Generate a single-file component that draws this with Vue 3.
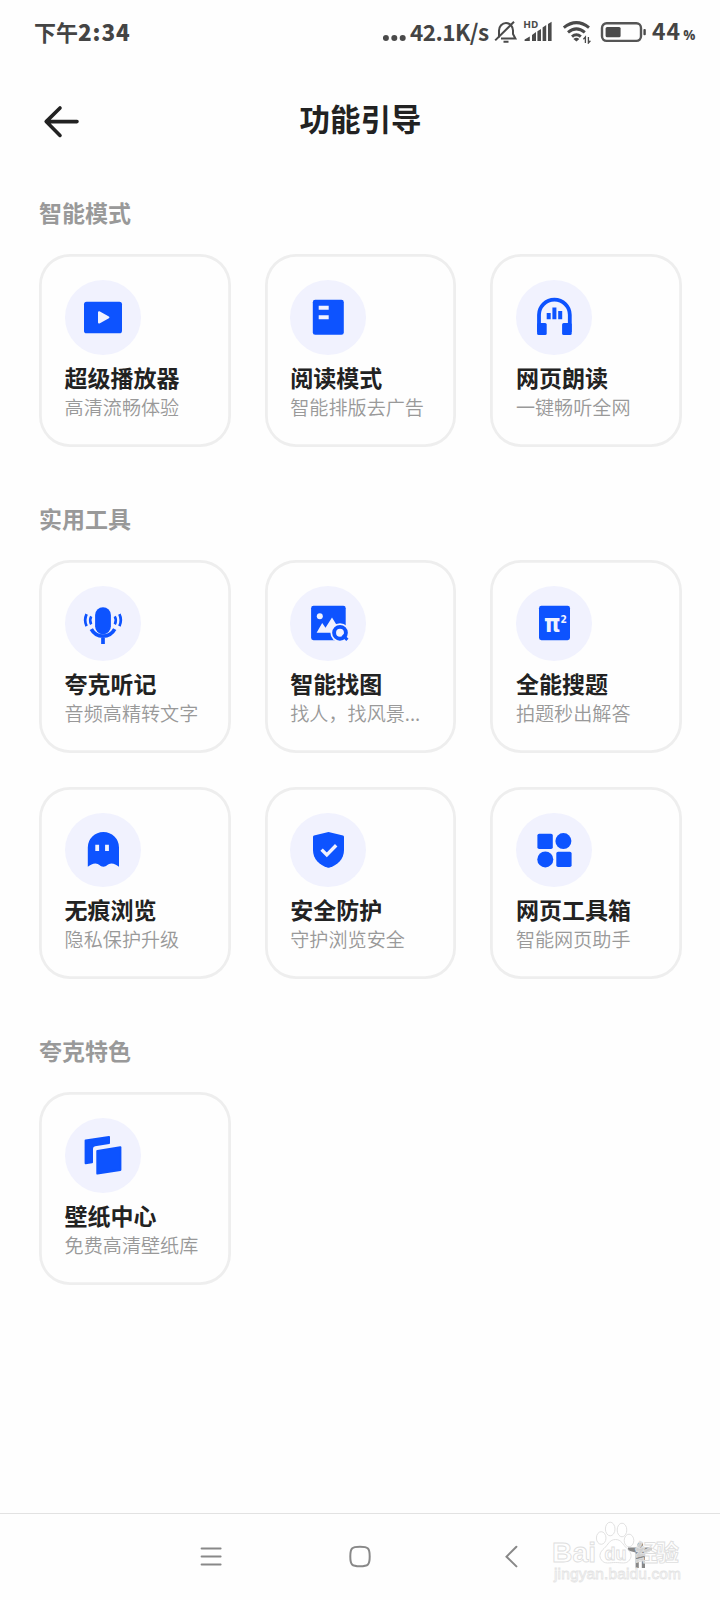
<script setup>
import { ref } from 'vue';

// Icon markup, drawn on the 76x75 badge
const icons = {
  player: `
    <rect x="19" y="21.7" width="38" height="31.6" rx="2.6" fill="#0d53ff"/>
    <path d="M34 32.2v10.4l9.4-5.2z" fill="#f1f2fe" stroke="#f1f2fe" stroke-width="2" stroke-linejoin="round"/>`,
  reader: `
    <rect x="22.8" y="19.8" width="31" height="35" rx="2.4" fill="#0d53ff"/>
    <path d="M28.7 25.8h10v4h-10zM28.7 35.2h10v4h-10z" fill="#f1f2fe"/>`,
  headphone: `
    <path d="M23 52V34.8a15.4 15.2 0 0 1 30.8 0V52" fill="none" stroke="#0d53ff" stroke-width="3.8"/>
    <rect x="21.1" y="43" width="9.6" height="12" rx="1.6" fill="#0d53ff"/>
    <rect x="46.1" y="43" width="9.6" height="12" rx="1.6" fill="#0d53ff"/>
    <path d="M30.7 33h4v6.3h-4zM36.4 27.4h4v11.9h-4zM42.2 31h4v8.3h-4z" fill="#0d53ff"/>`,
  mic: `
    <rect x="30.1" y="21.2" width="15.8" height="27" rx="7.9" fill="#0d53ff"/>
    <path d="M26.3 43.2a13.3 13.3 0 0 0 23.4 0M38 51v7" fill="none" stroke="#0d53ff" stroke-width="3.7"/>
    <path d="M26.2 30.4q-2.2 4 0 8M49.8 30.4q2.2 4 0 8" fill="none" stroke="#0d53ff" stroke-width="2.5"/>
    <path d="M21.6 28.2q-2.9 6.1 0 12M54.4 28.2q2.9 6.1 0 12" fill="none" stroke="#0d53ff" stroke-width="2.7"/>`,
  picture: `
    <rect x="21.1" y="19.8" width="34.6" height="34.4" rx="2.4" fill="#0d53ff"/>
    <circle cx="29.8" cy="30.2" r="3" fill="#f1f2fe"/>
    <path d="M26.6 46.8 32.2 37l3.3 4.8L42 31.6l6 9.6v5.6z" fill="#f1f2fe"/>
    <circle cx="50" cy="46.8" r="9.6" fill="#f1f2fe"/>
    <circle cx="50" cy="46.8" r="5.9" fill="none" stroke="#0d53ff" stroke-width="3.9"/>
    <path d="m52.6 49.2 4.8 4.7" fill="none" stroke="#0d53ff" stroke-width="3.2"/>`,
  search: `
    <rect x="23" y="19.8" width="31" height="34.4" rx="2.4" fill="#0d53ff"/>
    <text x="28" y="46" font-family="DejaVu Sans" font-weight="700" font-size="25" textLength="23" lengthAdjust="spacingAndGlyphs" fill="#f1f2fe">π<tspan dy="-9" font-size="11">2</tspan></text>`,
  ghost: `
    <path d="M22.8 34.4a15.6 15.4 0 0 1 31.2 0v19.4c-2.6-1.6-4.8-3.2-7.6-3.2-3.6 0-4.6 3.2-8 3.2s-4.4-3.2-8-3.2c-2.8 0-5 1.6-7.6 3.2z" fill="#0d53ff"/>
    <path d="M30.3 31.7h3.8v6.4h-3.8zM40.1 31.7h3.8v6.4h-3.8z" fill="#f1f2fe"/>`,
  shield: `
    <path d="M38.5 19 53 22.6q1 .3 1 1.3v13c0 9.5-6.5 14.8-14.3 17.6q-1.2.4-2.4 0C29.5 51.7 23 46.4 23 36.9v-13q0-1 1-1.3z" fill="#0d53ff"/>
    <path d="m31.6 36.6 5.2 5.3 9.4-9.7" fill="none" stroke="#f1f2fe" stroke-width="3.4"/>`,
  blocks: `
    <rect x="21.4" y="20.8" width="15.4" height="15.3" rx="1.8" fill="#0d53ff"/>
    <circle cx="47.4" cy="28.1" r="8" fill="#0d53ff"/>
    <circle cx="29.3" cy="46.4" r="8" fill="#0d53ff"/>
    <rect x="40.3" y="38.8" width="15.3" height="15.3" rx="1.8" fill="#0d53ff"/>`,
  wallpaper: `
    <path d="M20.6 22.4 44 19v5.9l-14 2.3q-3 .6-3 3.6v13.5l-6.4.9z" fill="#0d53ff" stroke="#0d53ff" stroke-width="2" stroke-linejoin="round"/>
    <path d="m32.4 33 22.9-3.7v22.5l-22.9 3.7z" fill="#0d53ff" stroke="#0d53ff" stroke-width="2.2" stroke-linejoin="round"/>`,
};

const sections = ref([
  {
    title: '智能模式',
    items: [
      { icon: 'player', name: '超级播放器', desc: '高清流畅体验' },
      { icon: 'reader', name: '阅读模式', desc: '智能排版去广告' },
      { icon: 'headphone', name: '网页朗读', desc: '一键畅听全网' },
    ],
  },
  {
    title: '实用工具',
    items: [
      { icon: 'mic', name: '夸克听记', desc: '音频高精转文字' },
      { icon: 'picture', name: '智能找图', desc: '找人，找风景...' },
      { icon: 'search', name: '全能搜题', desc: '拍题秒出解答' },
      { icon: 'ghost', name: '无痕浏览', desc: '隐私保护升级' },
      { icon: 'shield', name: '安全防护', desc: '守护浏览安全' },
      { icon: 'blocks', name: '网页工具箱', desc: '智能网页助手' },
    ],
  },
  {
    title: '夸克特色',
    items: [
      { icon: 'wallpaper', name: '壁纸中心', desc: '免费高清壁纸库' },
    ],
  },
]);
</script>

<template>
  <div class="phone">
    <div class="status-bar">
      <span class="clock">下午<b>2:34</b></span>
      <div class="status-right">
        <svg class="dots" width="27" height="24" viewBox="0 0 27 24">
          <circle cx="2.9" cy="18" r="3" />
          <circle cx="11.3" cy="18" r="3" />
          <circle cx="19.7" cy="18" r="3" />
        </svg>
        <span class="speed">42.1K/s</span>
        <svg class="bell" width="24" height="24" viewBox="0 0 24 24">
          <path d="M5 17.5V10.5a7 7.5 0 0 1 14 0V14l2.4 4.6H7" />
          <path d="M1.2 20.4 20 1.8M9.5 21.8h5" />
        </svg>
        <svg class="signal" width="32" height="26" viewBox="-2 -1 32 26">
          <text x="-0.8" y="8.2" textLength="15" lengthAdjust="spacingAndGlyphs">HD</text>
          <path d="M0.6 21v-1.4l5.2-3V21zM8 21v-6l4-3v9zM13.4 21V11.2l3.6-2.2v12zM18.6 21V7.4l3.6-2.3V21zM24 21V4l3.6-2.3V21z" />
        </svg>
        <svg class="wifi" width="30" height="24" viewBox="0 0 30 24">
          <path d="M1.8 7.6q12.6-10 25.2 0M6 12.4q8.4-7 16.8 0M10 16.6q4.4-3.8 8.8 0" />
          <path class="solid" d="m14.4 21.6-3-2.6q3-2.4 6 0z" />
          <path class="thin" d="M23.4 23v-6l-2 2.2M26.4 17v6l2-2.2" />
        </svg>
        <svg class="battery" width="46" height="24" viewBox="0 0 46 24">
          <rect class="shell" x="2" y="3.3" width="39" height="17.6" rx="4.6" />
          <rect class="level" x="5.6" y="7" width="15" height="10.3" rx="1.5" />
          <rect class="level" x="43.4" y="9" width="2.4" height="6.2" rx="1" />
        </svg>
        <span class="percent">44<small>%</small></span>
      </div>
    </div>

    <header class="header">
      <svg class="back" width="40" height="40" viewBox="0 0 40 40">
        <path d="M20 8 6.2 21.6l13.8 13.8M6.6 21.6h30.4" />
      </svg>
      <h1>功能引导</h1>
    </header>

    <main class="content">
      <section v-for="section in sections" :key="section.title" class="section">
        <h2>{{ section.title }}</h2>
        <div class="grid">
          <div v-for="item in section.items" :key="item.name" class="card">
            <div class="badge">
              <svg width="76" height="75" viewBox="0 0 76 75" v-html="icons[item.icon]"></svg>
            </div>
            <h3>{{ item.name }}</h3>
            <p>{{ item.desc }}</p>
          </div>
        </div>
      </section>
    </main>

    <nav class="nav-bar">
      <span class="nav-item">
        <svg width="24" height="24" viewBox="0 0 24 24"><path d="M2.6 3.5h19M2.6 11.5h19M2.6 19.5h19" /></svg>
      </span>
      <span class="nav-item">
        <svg width="24" height="24" viewBox="0 0 24 24">
          <path d="M12 1.8c8.2 0 9.7 1.5 9.7 9.7s-1.5 9.7-9.7 9.7S2.3 19.7 2.3 11.5 3.800 1.800 12 1.800z" />
        </svg>
      </span>
      <span class="nav-item">
        <svg width="24" height="24" viewBox="0 0 24 24"><path d="m19.4 1.8-9.9 9.9 9.9 9.7" /></svg>
      </span>
      <span class="nav-item last">
        <svg class="person" width="30" height="30" viewBox="0 0 30 30">
          <circle cx="16.3" cy="3" r="2.8" />
          <path d="M4 5.5h24v3l-7 2V26h-3.2v-7.5h-3V26h-3.2V10.5l-7.6-2z" />
        </svg>
      </span>
    </nav>

    <!-- site watermark lying over the navigation bar -->
    <svg class="watermark" width="140" height="72" viewBox="0 0 140 72">
      <text class="big" x="4" y="46.5" font-size="28" textLength="44" lengthAdjust="spacingAndGlyphs">Bai</text>
      <ellipse cx="53.2" cy="23" rx="4.8" ry="6.3" />
      <ellipse cx="62.2" cy="14" rx="4.8" ry="6.8" />
      <ellipse cx="74" cy="15" rx="4.8" ry="6.8" />
      <ellipse cx="81" cy="25.5" rx="4.8" ry="6.3" />
      <path d="M67.5 24.5c6 0 7 5 11.5 9 4 3.5 5.5 7.5 2.5 11.5-3 4.5-8 2.5-14 2.5s-11 2-14-2.5c-3-4-1.5-8 2.5-11.5 4.5-4 5.5-9 11.5-9z" />
      <text class="big" x="56.5" y="45" font-size="19" textLength="22" lengthAdjust="spacingAndGlyphs">du</text>
      <text class="cjk" x="87" y="46" font-size="23" textLength="44">经验</text>
      <text class="url" x="6" y="63.5" textLength="127">jingyan.baidu.com</text>
    </svg>
  </div>
</template>

<style>
body {
  background: #fefefe;
}
</style>

<style scoped>
.phone {
  position: relative;
  width: 720px;
  height: 1600px;
  display: flex;
  flex-direction: column;
  overflow: hidden;
  background: #fefefe;
  font-family: 'Noto Sans CJK SC', sans-serif;
}

h1,
h2,
h3,
p {
  margin: 0;
}

svg {
  display: block;
  flex: none;
}

.status-bar {
  height: 64px;
  padding: 0 24px 0 34px;
  display: flex;
  align-items: center;
  justify-content: space-between;
  color: #444;
  font-weight: 700;
}

.clock {
  padding-bottom: 2px;
  font-size: 22px;
  line-height: 32px;
}

.clock b {
  font-size: 22.5px;
  letter-spacing: 0.9px;
}

.status-right {
  display: flex;
  align-items: center;
  height: 24px;
}

.status-right svg {
  fill: #4a4a4a;
}

.speed {
  width: 84px;
  padding-bottom: 2px;
  font-size: 22.5px;
  line-height: 24px;
  letter-spacing: -0.55px;
}

.bell {
  margin-right: 4px;
}

.status-right .bell {
  fill: none;
  stroke: #4a4a4a;
  stroke-width: 2;
}

.signal {
  margin-right: 8px;
  overflow: visible;
}

.signal text {
  font-family: 'Noto Sans CJK SC', sans-serif;
  font-size: 9.5px;
  font-weight: 700;
}

.wifi {
  margin-right: 8px;
}

.status-right .wifi {
  fill: none;
  stroke: #4a4a4a;
  stroke-width: 3;
}

.status-right .wifi .solid {
  fill: #4a4a4a;
  stroke: none;
}

.wifi .thin {
  stroke-width: 1.3;
}

.battery {
  margin-right: 6px;
}

.battery .shell {
  fill: none;
  stroke: #555;
  stroke-width: 2.4;
}

.percent {
  width: 44px;
  font-size: 23px;
  line-height: 24px;
  letter-spacing: 1px;
  white-space: nowrap;
}

.percent small {
  margin-left: 2px;
  font-family: 'Open Sans', sans-serif;
  font-size: 13.5px;
  font-weight: 700;
}

.header {
  height: 112px;
  padding: 0 40px;
  display: grid;
  grid-template-columns: 40px 1fr 40px;
  align-items: center;
}

.header .back {
  fill: none;
  stroke: #222;
  stroke-width: 3.6;
  stroke-linecap: round;
  stroke-linejoin: round;
}

.header h1 {
  padding: 0 0 4px 1px;
  color: #222;
  font-size: 30.5px;
  line-height: 40px;
  font-weight: 700;
  text-align: center;
}

.content {
  flex: 1;
  padding: 21px 38px 0 39px;
}

.section {
  margin-bottom: 56px;
}

.section h2 {
  height: 30px;
  margin-bottom: 27.4px;
  color: #999;
  font-size: 23px;
  line-height: 30px;
  font-weight: 700;
}

.grid {
  display: grid;
  grid-template-columns: repeat(3, 1fr);
  gap: 34px;
}

.card {
  height: 192.4px;
  padding: 26px 0 0 25.6px;
  box-sizing: border-box;
  border-radius: 31px;
  box-shadow: inset 0 0 0 2.8px #eee;
}

.badge {
  width: 76px;
  height: 74.5px;
  border-radius: 50%;
  background: #f1f2fe;
}

.card h3 {
  margin-top: 7px;
  color: #222;
  font-size: 23px;
  line-height: 30px;
  font-weight: 700;
}

.card p {
  margin-top: 1px;
  color: #999;
  font-size: 19.1px;
  line-height: 28px;
  font-weight: 350;
}

.nav-bar {
  height: 87px;
  padding-left: 136.5px;
  box-sizing: border-box;
  border-top: 1px solid #e2e2e2;
  display: flex;
}

.nav-item {
  width: 149px;
  display: flex;
  align-items: center;
  justify-content: center;
}

.nav-item.last {
  width: 110px;
}

.nav-item svg {
  fill: none;
  stroke: #888;
  stroke-width: 2;
  stroke-linecap: round;
}

.nav-item .person {
  fill: #888;
  stroke: none;
}

.watermark {
  position: absolute;
  left: 548px;
  top: 1515px;
  fill: rgba(255, 255, 255, 0.6);
  stroke: #dedede;
  stroke-width: 0.9;
}

.watermark .big {
  font-family: 'Liberation Sans', sans-serif;
  font-weight: 700;
}

.watermark .cjk {
  font-family: 'Noto Sans CJK SC', sans-serif;
  font-weight: 700;
}

.watermark .url {
  font-family: 'Liberation Sans', sans-serif;
  font-size: 15.5px;
  stroke: #e4e4e4;
  stroke-width: 0.8;
}
</style>
